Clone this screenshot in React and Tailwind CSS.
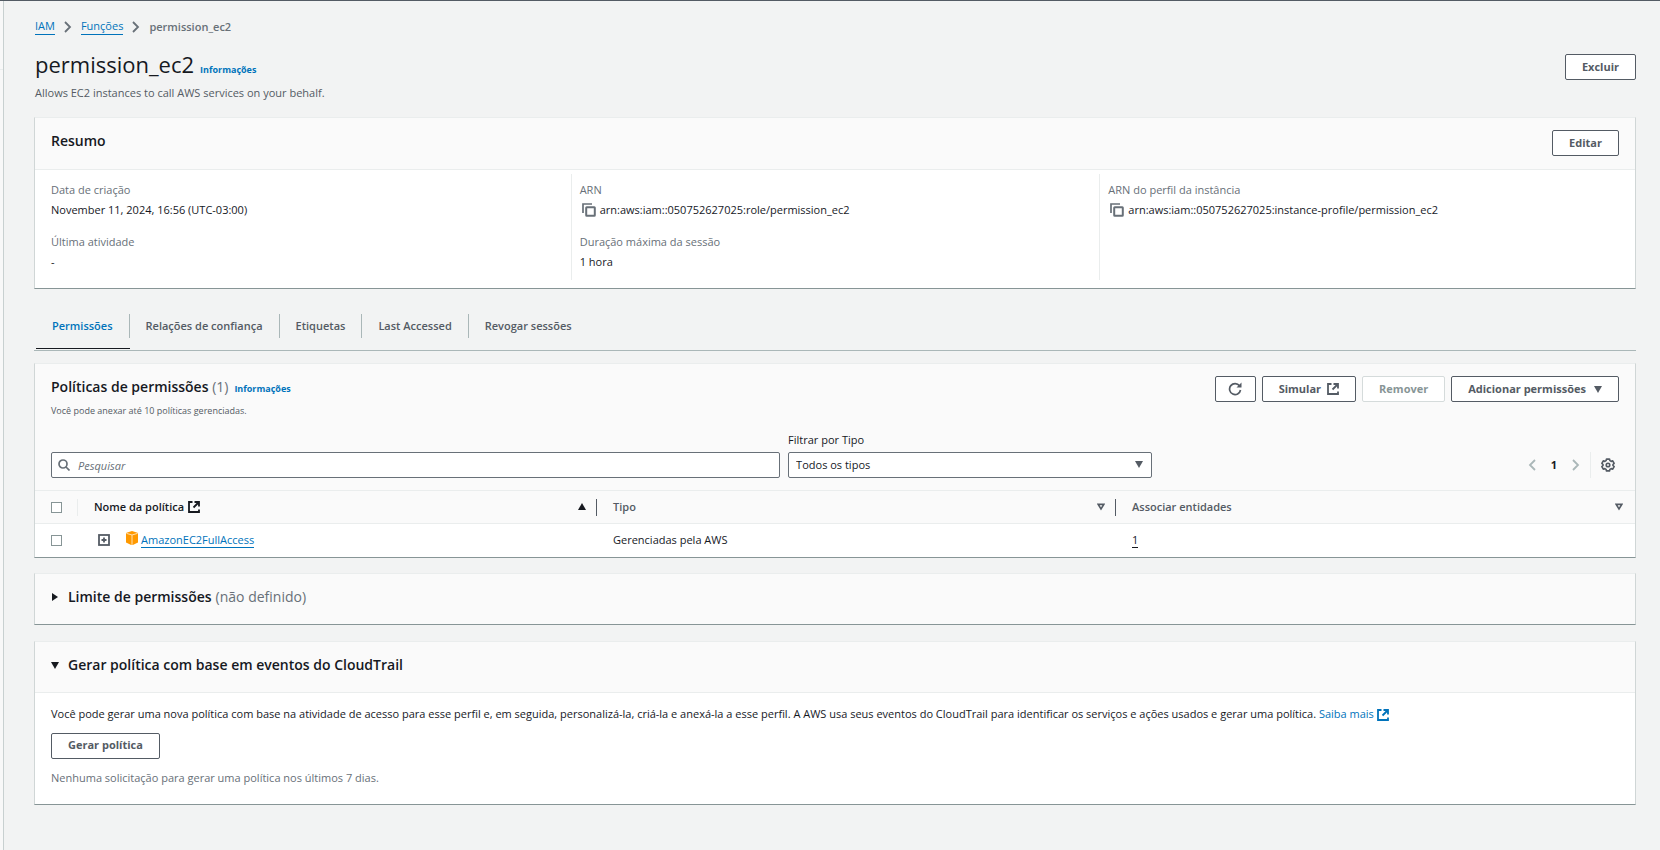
import { useState } from "react";
import clsx from "clsx";

const TABS = [
  "Permissões",
  "Relações de confiança",
  "Etiquetas",
  "Last Accessed",
  "Revogar sessões",
];

const POLICIES = [
  { name: "AmazonEC2FullAccess", type: "Gerenciadas pela AWS", entities: 1 },
];

function ExternalIcon({ className }) {
  return (
    <svg
      viewBox="0 0 12 12"
      className={clsx("size-3 shrink-0", className)}
      fill="none"
      stroke="currentColor"
      strokeWidth="1.8"
      aria-hidden="true"
    >
      <path d="M4.500 1H1v10h10V8.500" />
      <path d="M6.500 1H11v4.500M11 1L5.500 6.500" />
    </svg>
  );
}

function CopyIcon() {
  return (
    <svg viewBox="0 0 14 14" className="size-3.5" fill="none" stroke="currentColor" aria-hidden="true">
      <path d="M1 10V1h9" strokeWidth="1.7" />
      <rect x="4.2" y="4.2" width="8.6" height="8.6" rx="0.5" strokeWidth="2" />
    </svg>
  );
}

function Chevron({ className, left }) {
  return (
    <svg
      viewBox="0 0 8 12"
      className={clsx("h-3 w-2", className)}
      fill="none"
      stroke="currentColor"
      strokeWidth="1.8"
      aria-hidden="true"
    >
      <path d={left ? "M7 1L2 6l5 5" : "M1 1l5 5-5 5"} />
    </svg>
  );
}

function Triangle({ className, d = "M0 1h8L4 8z" }) {
  return (
    <svg viewBox="0 0 8 8" className={clsx("size-2 shrink-0", className)} fill="currentColor" aria-hidden="true">
      <path d={d} />
    </svg>
  );
}

function SortIcon() {
  return (
    <svg
      viewBox="0 0 8 8"
      className="size-2 shrink-0"
      fill="none"
      stroke="currentColor"
      strokeWidth="1.6"
      aria-hidden="true"
    >
      <path d="M1.2 1.4h5.6L4 6z" />
    </svg>
  );
}

function PolicyIcon() {
  return (
    <svg viewBox="0 0 12 14" className="mb-1 h-3.5 w-3 shrink-0" aria-hidden="true">
      <path d="M6 0l5.500 1.800L12 3v8.500L6.800 14H5.200L0 11.500V3l.5-1.200z" fill="#ff9900" />
      <path d="M.6 2.400L6 4l5.400-1.600M6 4v10" fill="none" stroke="#ffe0b0" strokeWidth="1" />
    </svg>
  );
}

function Button({ className, children, ...props }) {
  return (
    <button
      type="button"
      className={clsx(
        "flex h-[26px] items-center justify-center rounded-xs border border-[#545b64] bg-white px-4 font-bold text-[#545b64]",
        "disabled:border-[#d5dbdb] disabled:text-[#879596]",
        className
      )}
      {...props}
    >
      {children}
    </button>
  );
}

function Panel({ className, children }) {
  return (
    <section
      className={clsx(
        "border border-t-[#eaeded] border-x-[#d0d6d6] border-b-[#879596] bg-white",
        className
      )}
    >
      {children}
    </section>
  );
}

function Field({ label, children }) {
  return (
    <div>
      <dt className="leading-4 text-[#687078]">{label}</dt>
      <dd className="mt-1 flex h-4 items-center leading-4">{children}</dd>
    </div>
  );
}

function CopyValue({ value }) {
  return (
    <>
      <button type="button" aria-label="Copiar" className="mr-1 ml-0.5 text-[#687078]">
        <CopyIcon />
      </button>
      {value}
    </>
  );
}

function Summary() {
  return (
    <Panel className="mt-4">
      <div className="flex h-[52px] items-start justify-between border-b border-[#eaeded] bg-[#fafafa] px-4 pt-3">
        <h2 className="text-sm leading-[22px] font-semibold">Resumo</h2>
        <Button>Editar</Button>
      </div>
      <div className="grid grid-cols-3 px-[7px] pt-1 pb-2">
        <dl className="h-[106px] space-y-4 border-l border-transparent px-2 pt-2">
          <Field label="Data de criação">November 11, 2024, 16:56 (UTC-03:00)</Field>
          <Field label="Última atividade">-</Field>
        </dl>
        <dl className="space-y-4 border-l border-[#eaeded] px-2 pt-2">
          <Field label="ARN">
            <CopyValue value="arn:aws:iam::050752627025:role/permission_ec2" />
          </Field>
          <Field label="Duração máxima da sessão">1 hora</Field>
        </dl>
        <dl className="space-y-4 border-l border-[#eaeded] px-2 pt-2">
          <Field label="ARN do perfil da instância">
            <CopyValue value="arn:aws:iam::050752627025:instance-profile/permission_ec2" />
          </Field>
        </dl>
      </div>
    </Panel>
  );
}

function Tabs() {
  const [active, setActive] = useState(TABS[0]);

  return (
    <div role="tablist" className="mt-6 flex border-b border-[#aab7b8]">
      {TABS.map((tab, i) => (
        <button
          key={tab}
          type="button"
          role="tab"
          aria-selected={active === tab}
          onClick={() => setActive(tab)}
          className={clsx(
            "mb-px flex h-9 items-start border-b pt-px font-semibold",
            i === 0 && "ml-0.5",
            active === tab
              ? "border-[#16191f] text-[#0073bb]"
              : "border-transparent text-[#545b64]"
          )}
        >
          <span
            className={clsx(
              "flex h-6 items-center px-4",
              i < TABS.length - 1 && "border-r border-[#aab7b8]"
            )}
          >
            {tab}
          </span>
        </button>
      ))}
    </div>
  );
}

function Checkbox(props) {
  return (
    <input
      type="checkbox"
      className="block size-[11px] appearance-none border border-[#879596] bg-white checked:bg-[#0073bb]"
      {...props}
    />
  );
}

function Policies() {
  const [search, setSearch] = useState("");
  const [selected, setSelected] = useState(false);

  return (
    <Panel className="mt-3">
      <div className="bg-[#fafafa] px-4 pt-3">
        <div className="flex items-start justify-between">
          <div>
            <h2 className="text-sm leading-[22px] font-semibold">
              Políticas de permissões <span className="font-normal text-[#687078]">(1)</span>
              <a href="#info" className="ml-1.5 text-[9px] font-bold text-[#0073bb]">
                Informações
              </a>
            </h2>
            <p className="mt-0.5 text-[9px] leading-[18px] text-[#545b64]">
              Você pode anexar até 10 políticas gerenciadas.
            </p>
          </div>
          <div className="flex gap-1.5">
            <Button aria-label="Atualizar" className="w-[41px]">
              <svg
                viewBox="0 0 14 14"
                className="size-3.5 shrink-0"
                fill="none"
                stroke="currentColor"
                strokeWidth="1.7"
                aria-hidden="true"
              >
                <path d="M11.500 3.800A5.500 5.500 0 1 0 12.500 8" />
                <path d="M13.500.5v5H8.500z" fill="currentColor" stroke="none" />
              </svg>
            </Button>
            <Button>
              Simular <ExternalIcon className="ml-1.5" />
            </Button>
            <Button disabled={!selected}>Remover</Button>
            <Button>
              Adicionar permissões <Triangle className="ml-2" />
            </Button>
          </div>
        </div>

        <div className="mt-3 flex items-end pb-3">
          <div className="flex w-[46.5%] items-center rounded-xs border border-[#687078] bg-white">
            <svg
              viewBox="0 0 12 12"
              className="ml-1.5 size-3 shrink-0 text-[#687078]"
              fill="none"
              stroke="currentColor"
              strokeWidth="1.7"
              aria-hidden="true"
            >
              <circle cx="5" cy="5" r="4" />
              <path d="M8 8l3.5 3.5" />
            </svg>
            <input
              type="text"
              aria-label="Pesquisar"
              placeholder="Pesquisar"
              value={search}
              onChange={(e) => setSearch(e.target.value)}
              className="h-6 grow px-2 outline-none placeholder:text-[#687078] placeholder:italic"
            />
          </div>

          <div className="ml-2 w-[23.2%]">
            <label htmlFor="tipo" className="mb-1 block leading-4">
              Filtrar por Tipo
            </label>
            <div className="relative">
              <select
                id="tipo"
                className="block h-[26px] w-full appearance-none rounded-xs border border-[#687078] bg-white px-[7px]"
              >
                <option>Todos os tipos</option>
              </select>
              <Triangle className="pointer-events-none absolute top-[8px] right-[9px] text-[#545b64]" />
            </div>
          </div>

          <div className="ml-auto flex h-[26px] items-center">
            <button type="button" aria-label="Página anterior" className="text-[#aab7b8]">
              <Chevron left />
            </button>
            <button type="button" className="w-9 font-bold">
              1
            </button>
            <button type="button" aria-label="Próxima página" className="text-[#aab7b8]">
              <Chevron />
            </button>
            <span className="ml-2.5 h-full border-l border-[#eaeded]" />
            <button type="button" aria-label="Preferências" className="mr-1 ml-2.5 text-[#545b64]">
              <svg
                viewBox="0 0 16 16"
                className="size-3.5"
                fill="none"
                stroke="currentColor"
                strokeWidth="1.9"
                strokeLinejoin="round"
                aria-hidden="true"
              >
                <path d="M6.3 1.2h3.4l.5 1.8 1.4.8 1.8-.5 1.6 2.8L13.7 7.4v1.2L15 9.9l-1.6 2.8-1.8-.5-1.4.8-.5 1.8H6.3L5.800 13l-1.400-.8-1.800.5L1 9.900l1.300-1.300V7.400L1 6.100l1.600-2.800 1.800.5L5.800 3z" />
                <circle cx="8" cy="8" r="2" />
              </svg>
            </button>
          </div>
        </div>
      </div>

      <table className="w-full table-fixed border-t border-[#eaeded] text-left">
        <thead>
          <tr className="h-[33px] border-b border-[#eaeded] bg-[#fafafa] text-[#545b64]">
            <th className="w-[43px] p-0">
              <div className="flex h-[17px] items-center border-r border-[#eaeded] pl-4">
                <Checkbox
                  aria-label="Selecionar todas"
                  checked={selected}
                  onChange={(e) => setSelected(e.target.checked)}
                />
              </div>
            </th>
            <th className="p-0 font-semibold text-[#16191f]">
              <div className="flex h-[17px] items-center border-r border-[#545b64] pr-2.5 pl-4">
                Nome da política <ExternalIcon className="ml-1" />
                <Triangle className="ml-auto" d="M0 7h8L4 0z" />
              </div>
            </th>
            <th className="p-0 font-semibold">
              <div className="flex h-[17px] items-center justify-between border-r border-[#545b64] pr-2.5 pl-4">
                Tipo <SortIcon />
              </div>
            </th>
            <th className="p-0 font-semibold">
              <div className="flex h-[17px] items-center justify-between pr-3 pl-4">
                Associar entidades <SortIcon />
              </div>
            </th>
          </tr>
        </thead>
        <tbody>
          {POLICIES.map((p) => (
            <tr key={p.name} className="h-[33px]">
              <td className="p-0 pl-4">
                <Checkbox
                  aria-label={p.name}
                  checked={selected}
                  onChange={(e) => setSelected(e.target.checked)}
                />
              </td>
              <td className="p-0 pl-5">
                <div className="flex items-center">
                  <button type="button" aria-label="Expandir" className="mr-4 text-[#545b64]">
                    <svg
                      viewBox="0 0 12 12"
                      className="size-3"
                      fill="none"
                      stroke="currentColor"
                      strokeWidth="1.8"
                      aria-hidden="true"
                    >
                      <rect x="1" y="1" width="10" height="10" />
                      <path d="M6 3.5v5M3.5 6h5" />
                    </svg>
                  </button>
                  <PolicyIcon />
                  <a href="#policy" className="ml-[3px] border-b border-[#0073bb] leading-[14px] text-[#0073bb]">
                    {p.name}
                  </a>
                </div>
              </td>
              <td className="p-0 pl-4">{p.type}</td>
              <td className="p-0 pl-4">
                <span className="border-b border-dashed border-[#16191f]">{p.entities}</span>
              </td>
            </tr>
          ))}
        </tbody>
      </table>
    </Panel>
  );
}

function Boundary() {
  return (
    <Panel className="mt-[15px]">
      <h2 className="bg-[#fafafa] text-sm font-semibold">
        <button type="button" aria-expanded="false" className="flex w-full items-center px-4 pt-3 pb-4 leading-[22px]">
          <Triangle className="mr-[9px]" d="M1 0v8l6-4z" />
          Limite de permissões
          <span className="ml-1 font-normal text-[#687078]">(não definido)</span>
        </button>
      </h2>
    </Panel>
  );
}

function GeneratePolicy() {
  const [open, setOpen] = useState(true);

  return (
    <Panel className="mt-4">
      <h2 className="bg-[#fafafa] text-sm font-semibold">
        <button
          type="button"
          aria-expanded={open}
          onClick={() => setOpen(!open)}
          className="flex w-full items-center border-b border-[#eaeded] px-4 pt-3 pb-4 leading-[22px]"
        >
          <Triangle className="mr-[9px]" d={open ? "M0 1h8L4 8z" : "M1 0v8l6-4z"} />
          Gerar política com base em eventos do CloudTrail
        </button>
      </h2>
      {open && (
        <div className="px-4 pt-3 pb-[17px]">
          <p className="leading-[18px]">
            Você pode gerar uma nova política com base na atividade de acesso para esse perfil e, em seguida,
            personalizá-la, criá-la e anexá-la a esse perfil. A AWS usa seus eventos do CloudTrail para identificar
            os serviços e ações usados e gerar uma política.{" "}
            <a href="#saiba-mais" className="text-[#0073bb]">
              Saiba mais <ExternalIcon className="inline" />
            </a>
          </p>
          <Button className="mt-2.5">Gerar política</Button>
          <p className="mt-2.5 leading-[18px] text-[#687078]">
            Nenhuma solicitação para gerar uma política nos últimos 7 dias.
          </p>
        </div>
      )}
    </Panel>
  );
}

export default function App() {
  return (
    <div className="flex min-h-screen border-t border-[#545b64] bg-[#f2f3f3] font-['Open_Sans','Noto_Sans',sans-serif] text-[11px] text-[#16191f]">
      <aside className="w-1 shrink-0 border-r border-[#c8d0d0] bg-[#f8f8f8] pt-[68px]">
        <div className="border-t border-[#eaeded]" />
      </aside>
      <main className="min-w-0 grow pr-6 pl-[30px]">
        <nav aria-label="Trilha" className="flex items-center pt-[17px] pl-px leading-4 text-[#687078]">
          <a href="#iam" className="border-b border-[#0073bb] text-[#0073bb]">
            IAM
          </a>
          <Chevron className="mx-[9px]" />
          <a href="#funcoes" className="border-b border-[#0073bb] text-[#0073bb]">
            Funções
          </a>
          <Chevron className="mx-[9px]" />
          <span className="font-semibold">permission_ec2</span>
        </nav>

        <header className="mt-3.5 flex items-start justify-between pl-px">
          <div>
            <h1 className="text-[22px] leading-[30px]">
              permission_ec2
              <a href="#info" className="ml-1.5 text-[9px] font-bold text-[#0073bb]">
                Informações
              </a>
            </h1>
            <p className="leading-4 text-[#545b64]">
              Allows EC2 instances to call AWS services on your behalf.
            </p>
          </div>
          <Button className="mt-[5px]">Excluir</Button>
        </header>

        <Summary />
        <Tabs />
        <Policies />
        <Boundary />
        <GeneratePolicy />
      </main>
    </div>
  );
}
